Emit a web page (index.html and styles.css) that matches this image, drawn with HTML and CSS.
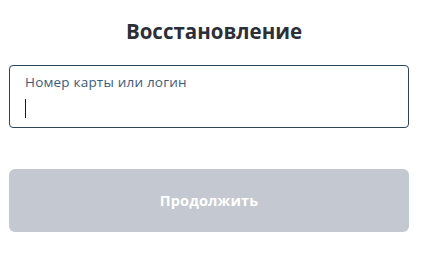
FILE: index.html
```html
<!DOCTYPE html>
<html lang="ru">
<head>
<meta charset="utf-8">
<link rel="stylesheet" href="styles.css">
</head>
<body>
<main class="page">
  <h1 class="title">Восстановление</h1>
  <label class="field">
    <span class="field-label">Номер карты или логин</span>
    <span class="caret"></span>
  </label>
  <button class="submit" type="button">Продолжить</button>
</main>
</body>
</html>
```
FILE: styles.css
```css
html, body {
  margin: 0;
  padding: 0;
  background: #ffffff;
}
body {
  font-family: "Open Sans", "Noto Sans", sans-serif;
}
.page {
  width: 400px;
  padding: 17px 0 0 9px;
  display: flex;
  flex-direction: column;
}
.title {
  margin: 0 0 0 10px;
  text-align: center;
  font-size: 20.5px;
  line-height: 29px;
  font-weight: 700;
  color: #2b3038;
}
.field {
  margin-top: 19px;
  box-sizing: border-box;
  height: 63px;
  border: 1px solid #2b4559;
  border-radius: 4px;
  padding: 7px 15px 0;
  display: flex;
  flex-direction: column;
}
.field-label {
  font-size: 13.5px;
  line-height: 19px;
  letter-spacing: 0.2px;
  color: #3b5b7e;
}
.caret {
  margin-top: 7px;
  width: 1px;
  height: 19px;
  background: #1a1a1a;
}
.submit {
  margin-top: 41px;
  height: 63px;
  border: 0;
  border-radius: 6px;
  background: #c3c8d1;
  color: #ffffff;
  font-family: "Open Sans", "Noto Sans", sans-serif;
  font-size: 14.5px;
  letter-spacing: 0.15px;
  font-weight: 700;
  padding: 0;
}
```
